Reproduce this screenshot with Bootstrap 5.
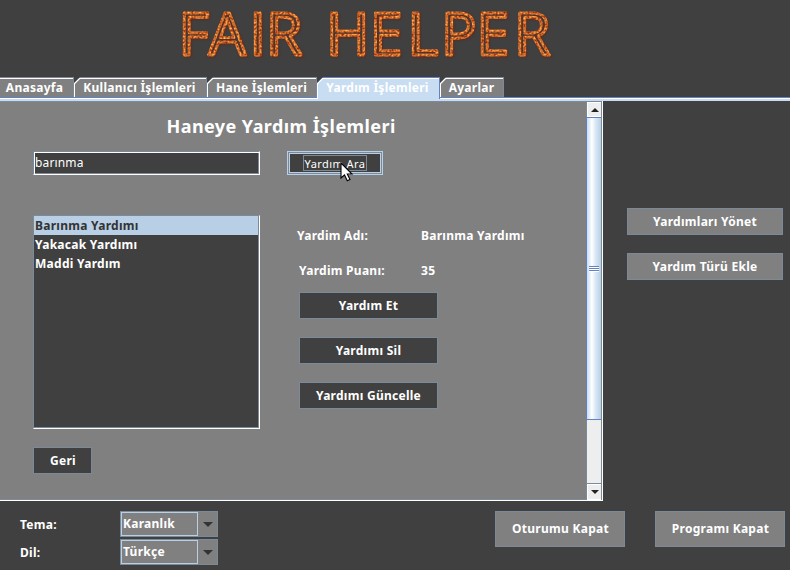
<!DOCTYPE html>
<html lang="tr">
<head>
<meta charset="utf-8">
<title>Fair Helper</title>
<link rel="stylesheet" href="https://cdn.jsdelivr.net/npm/bootstrap@5.3.0/dist/css/bootstrap.min.css">
<style>
:root{--dark:#404040;--mid:#808080;--edge:#7a8a99;--sel:#b8cfe5;--tab:#c8ddf2;--blue:#6382bf}
body{width:790px;height:570px;overflow:hidden;background:var(--dark);color:#fff;font:700 12px/16px "Noto Sans","Open Sans",sans-serif;letter-spacing:.27px}
b{font-weight:700}
.brand{height:77px}
.tabs{height:20px}
.tabx{position:relative;height:20px;line-height:21px;background:var(--edge);text-align:center;white-space:nowrap;z-index:0;clip-path:polygon(0 6px,6px 0,100% 0,100% 100%,0 100%)}
.tabx::before,.tabx::after{content:"";position:absolute;z-index:-1}
.tabx::before{inset:1px 0 0 0;background:#fff;clip-path:polygon(0 5px,5px 0,100% 0,100% 100%,0 100%)}
.tabx::after{inset:2px 1px 0 1px;background:var(--mid);clip-path:polygon(0 5px,5px 0,100% 0,100% 100%,0 100%)}
.tabx::before{right:1px}
.tabx:first-child,.tabx:first-child::before,.tabx:first-child::after{clip-path:none}
.tabx:first-child::after{left:0}
.tabx.on{background:var(--blue);height:22px}
.tabx.on::after{background:var(--tab)}
.strip{height:4px;background:linear-gradient(var(--blue) 0 1px,#fff 1px 2px,var(--tab) 2px)}
.pane{width:603px;height:400px;background:var(--mid);border:solid #fff;border-width:0 1px 1px 0;box-shadow:inset -1px -1px var(--edge),inset 0 1px var(--edge)}
.form{width:586px}
.heading{font-size:18px;line-height:24px;letter-spacing:.43px;padding:13px 0 0 166.5px;height:50px}
.field{width:227px;height:24px;margin-left:33px;background:var(--dark);border:1px solid #fff;border-left-color:var(--edge);border-top-color:var(--edge);font-weight:400;line-height:21px;padding-left:1px;letter-spacing:.15px;box-shadow:inset 1px 1px #fff,inset -1px -1px var(--edge)}
.find{width:96px;height:24px;margin-left:27px;padding:3px 0;background:var(--dark);border:1px solid var(--sel);box-shadow:inset 0 0 0 1px var(--edge),inset 0 0 0 2px var(--sel);position:relative;font-size:11px;font-weight:400;letter-spacing:.45px}
.find span{display:block;width:64px;height:16px;line-height:15px;margin:0 auto;border:1px solid var(--edge);text-align:center;white-space:nowrap}
.cursor{position:absolute;left:52px;top:10px}
.results{width:227px;height:214px;margin:40px 0 0 33px;background:var(--dark);border:solid;border-width:1px;border-color:var(--edge) #fff #fff var(--edge);box-shadow:inset -1px -1px var(--edge)}
.results div{height:19px;line-height:19px;padding-left:1px}
.results .pick{background:var(--sel);color:#333;margin-right:1px}
.details{padding-top:53px;margin-left:37px;width:280px}
.pair{height:35px;line-height:16px}
.pair b:first-child{width:124px}
.pair.second{height:29px;padding-left:2px}
.pair.second b:first-child{width:122px}
.btnx{background:var(--dark);border:1px solid var(--edge);display:flex;align-items:center;justify-content:center;white-space:nowrap}
.act{width:139px;height:27px;margin:0 0 18px 2px}
.back{width:59px;height:27px;margin:18px 0 0 33px;padding-left:1px}
.bar{width:16px;height:398px;margin-top:1px;background:#eee;border-left:1px solid var(--edge);border-right:1px solid var(--edge)}
.arrow{height:15px;background:#eee;border:1px solid #fff;border-right:0;display:flex;justify-content:center;align-items:center}
.arrow.mt-auto{height:16px;box-shadow:0 -1px var(--edge)}
.thumb{height:303px;border:1px solid var(--blue);border-right:0;background:linear-gradient(90deg,#c8ddf2,#fff 35%,#dbe8f5 60%,#b8cfe5);margin-left:-1px}
.grip{width:10px;height:6px;background:linear-gradient(var(--blue) 0 1px,#fff 1px 2px,var(--blue) 2px 3px,#fff 3px 4px,var(--blue) 4px 5px,#fff 5px)}
.side{padding:107px 0 0 24px}
.side .btnx{width:156px;height:27px;background:var(--mid);margin-bottom:18px}
.foot{padding:10px 5px 0 20px}
.sel{width:98px;height:26px;background:var(--mid);border:1px solid var(--edge)}
.sel span{width:77px;height:24px;line-height:21px;border:1px solid var(--sel);padding-left:1px}
.row1{height:28px}
.row1 b{width:100px;line-height:27px}
.quit{width:130px;height:36px;background:var(--mid);padding-left:1px}
</style>
</head>
<body>
<header class="brand">
<svg width="790" height="77" class="d-block">
<defs><filter id="lava" x="-5%" y="-20%" width="110%" height="140%" color-interpolation-filters="sRGB">
<feTurbulence type="fractalNoise" baseFrequency=".5" numOctaves="2" seed="11" result="n"/>
<feColorMatrix in="n" values=".7 0 0 0 .46  1 0 0 0 -.08  .5 0 0 0 -.08  0 0 0 0 1" result="c"/>
<feComposite in="c" in2="SourceAlpha" operator="in" result="t"/>
<feGaussianBlur in="SourceAlpha" stdDeviation=".8" result="b"/><feOffset in="b" dx=".5" dy=".5" result="s"/>
<feColorMatrix in="s" values="0 0 0 0 .4  0 0 0 0 .13  0 0 0 0 .05  0 0 0 .65 0" result="sh"/>
<feMerge><feMergeNode in="sh"/><feMergeNode in="t"/></feMerge></filter></defs>
<text y="55" x="178.5 208.5 249.5 266 326 369.7 407.5 441 476.5 514" font-family="Open Sans" font-weight="400" font-size="59" fill="none" stroke="#c40" stroke-width="2.9" stroke-linejoin="round" filter="url(#lava)">FAIRHELPER</text>
</svg>
</header>
<nav class="tabs d-flex">
<div class="tabx" style="width:74px;padding-right:5px">Anasayfa</div>
<div class="tabx" style="width:133px;padding-right:2px">Kullanıcı İşlemleri</div>
<div class="tabx" style="width:110px;padding-right:1px">Hane İşlemleri</div>
<div class="tabx on" style="width:123px;padding-right:2px">Yardım İşlemleri</div>
<div class="tabx" style="width:64px;padding-right:1px">Ayarlar</div>
</nav>
<div class="strip"></div>
<main class="d-flex">
<section class="pane d-flex">
<div class="form">
<div class="heading">Haneye Yardım İşlemleri</div>
<div class="d-flex">
<div class="field">barınma</div>
<div class="find"><span>Yardım Ara</span>
<svg class="cursor" width="14" height="20"><path d="M1 1V16L4.5 13L7.3 18.7L10 17.5L7.3 12H12Z" fill="#fff" stroke="#000" stroke-width="1.1"/></svg></div>
</div>
<div class="d-flex">
<div class="results"><div class="pick">Barınma Yardımı</div><div>Yakacak Yardımı</div><div>Maddi Yardım</div></div>
<div class="details">
<div class="pair d-flex"><b>Yardim Adı:</b><b>Barınma Yardımı</b></div>
<div class="pair second d-flex"><b>Yardim Puanı:</b><b>35</b></div>
<div class="btnx act">Yardım Et</div><div class="btnx act">Yardımı Sil</div><div class="btnx act">Yardımı Güncelle</div>
</div>
</div>
<div class="btnx back">Geri</div>
</div>
<div class="bar d-flex flex-column">
<div class="arrow"><svg width="8" height="4"><path d="M0 4L4 0L8 4Z" fill="#222"/></svg></div>
<div class="thumb d-flex align-items-center justify-content-center"><div class="grip"></div></div>
<div class="arrow mt-auto"><svg width="8" height="4"><path d="M0 0L4 4L8 0Z" fill="#222"/></svg></div>
</div>
</section>
<aside class="side"><div class="btnx">Yardımları Yönet</div><div class="btnx">Yardım Türü Ekle</div></aside>
</main>
<footer class="foot d-flex">
<div>
<div class="row1 d-flex"><b>Tema:</b><div class="sel d-flex"><span>Karanlık</span><svg width="19" height="24"><path d="M5 10H15L10 15Z" fill="#333"/></svg></div></div>
<div class="row1 d-flex"><b>Dil:</b><div class="sel d-flex"><span>Türkçe</span><svg width="19" height="24"><path d="M5 10H15L10 15Z" fill="#333"/></svg></div></div>
</div>
<div class="btnx quit ms-auto">Oturumu Kapat</div>
<div class="btnx quit" style="margin-left:30px">Programı Kapat</div>
</footer>
<script src="https://cdn.jsdelivr.net/npm/bootstrap@5.3.0/dist/js/bootstrap.bundle.min.js"></script>
</body>
</html>
